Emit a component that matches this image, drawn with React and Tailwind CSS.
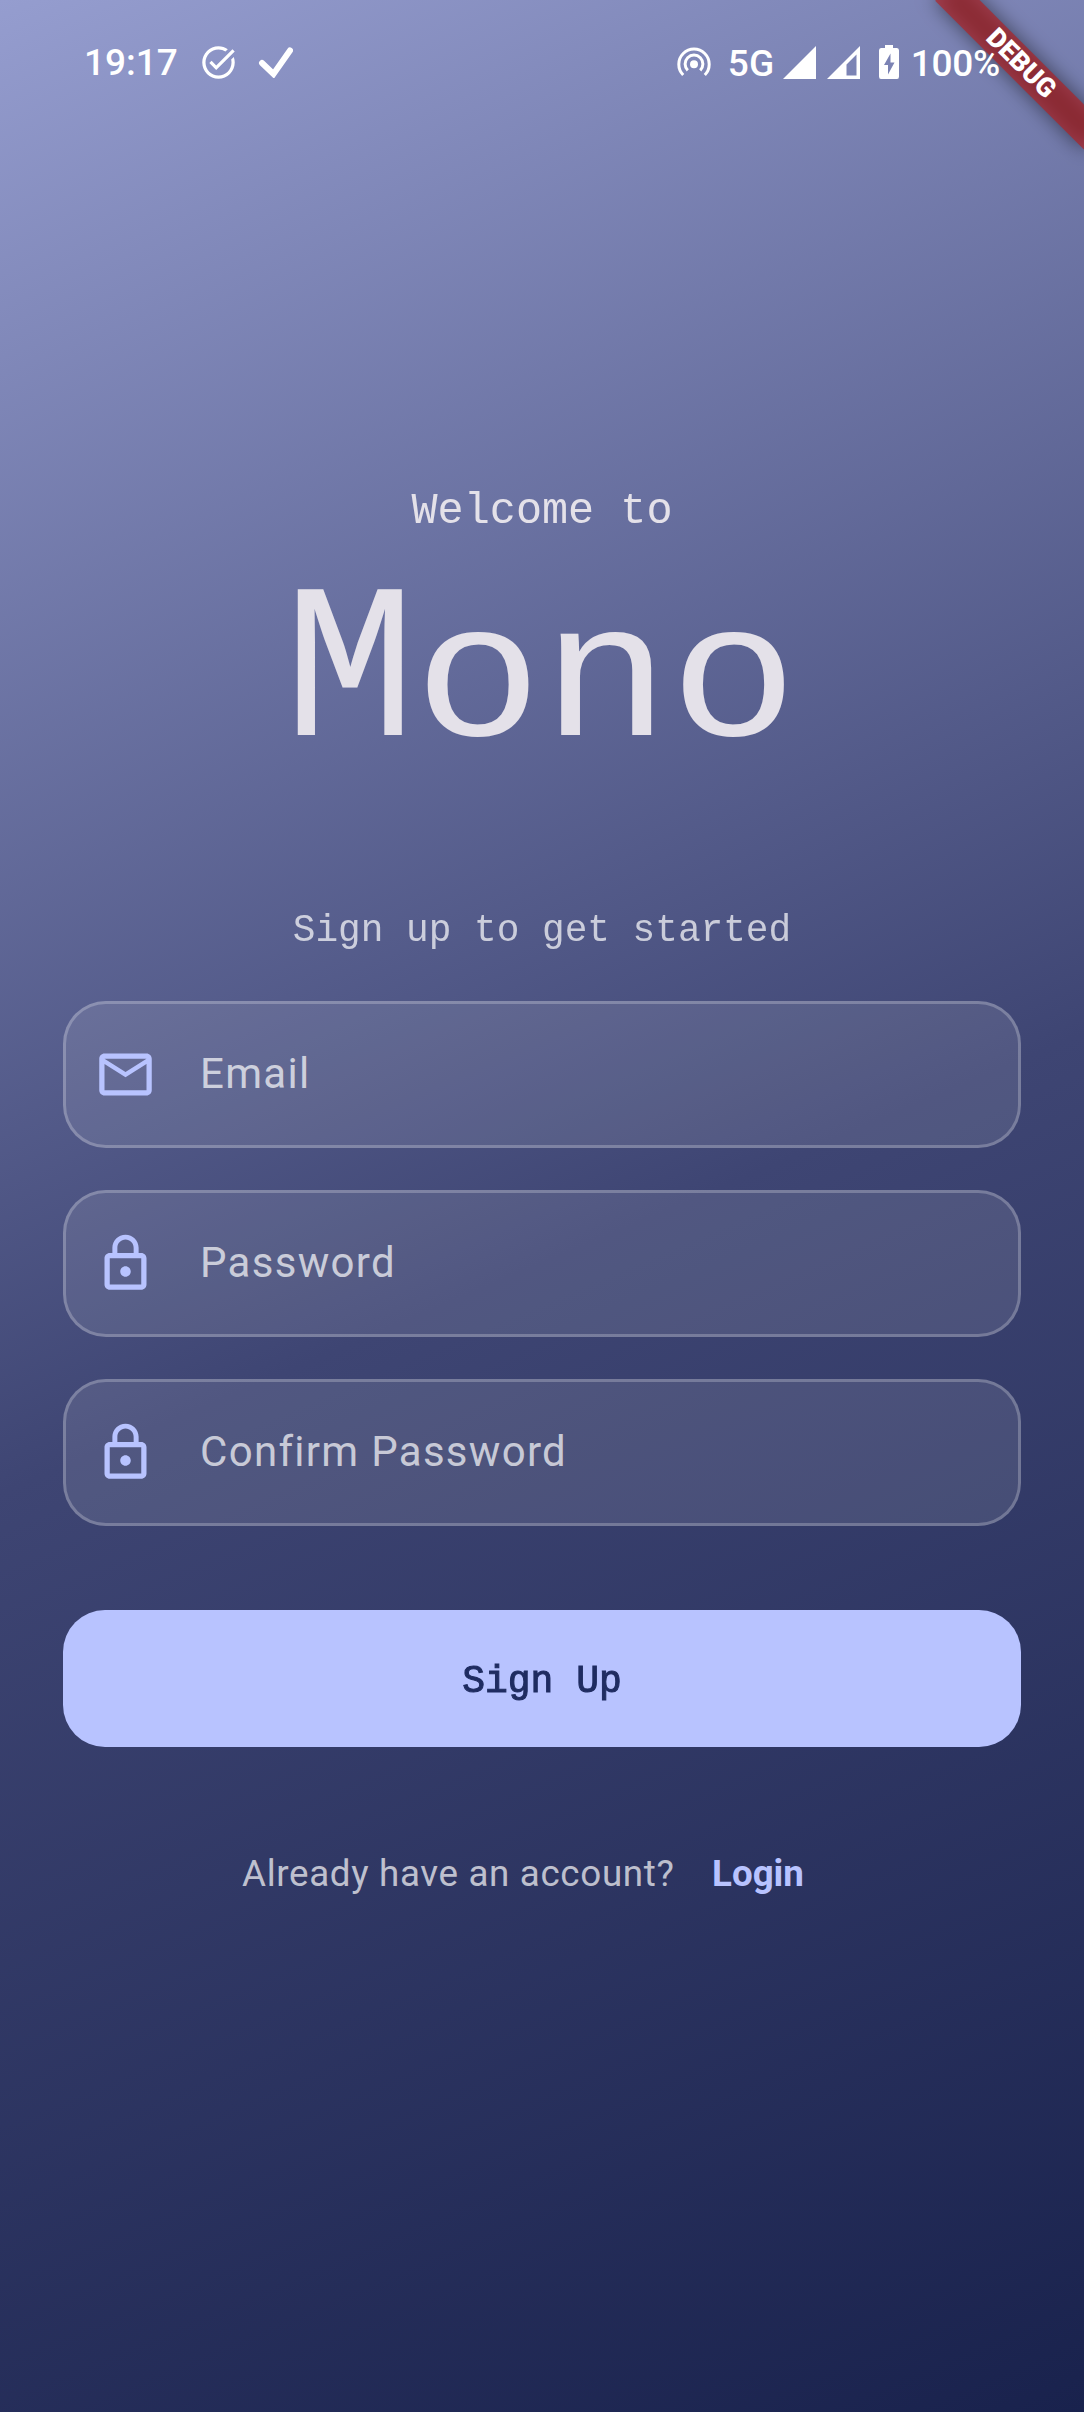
import React from "react";

const MAIL =
  "M22 6c0-1.1-.9-2-2-2H4c-1.1 0-2 .9-2 2v12c0 1.1.9 2 2 2h16c1.1 0 2-.9 2-2V6zm-2 0l-8 5-8-5h16zm0 12H4V8l8 5 8-5v10z";
const LOCK =
  "M12 17c1.1 0 2-.9 2-2s-.9-2-2-2-2 .9-2 2 .9 2 2 2zm6-9h-1V6c0-2.76-2.24-5-5-5S7 3.24 7 6v2H6c-1.1 0-2 .9-2 2v10c0 1.1.9 2 2 2h12c1.1 0 2-.9 2-2V10c0-1.1-.9-2-2-2zM8.9 6c0-1.71 1.39-3.1 3.1-3.1s3.1 1.39 3.1 3.1v2H8.9V6zM18 20H6V10h12v10z";
const TASK =
  "M22 5.18 10.59 16.6l-4.24-4.24 1.41-1.41 2.83 2.83 10-10L22 5.18zm-2.21 5.04c.13.57.21 1.17.21 1.78 0 4.42-3.58 8-8 8s-8-3.58-8-8 3.58-8 8-8c1.58 0 3.04.46 4.28 1.25l1.44-1.44C16.1 2.67 14.13 2 12 2 6.48 2 2 6.48 2 12s4.48 10 10 10 10-4.48 10-10c0-1.19-.22-2.33-.6-3.39l-1.61 1.61z";

function StatusBar() {
  return (
    <header className="relative z-10 flex h-[126px] items-start justify-between pl-[84px] pr-[83px] text-[37px] font-medium leading-[44px] text-white">
      <div className="flex pt-[41px]">
        <span className="w-[114.500px] tracking-[0px]">19:17</span>
        <svg className="mt-[2px] h-[39px] w-[39px] fill-white" viewBox="0 0 24 24">
          <path d={TASK} />
        </svg>
        <svg className="ml-[19px] mt-[5px] h-[32px] w-[36px]" viewBox="0 0 36 32" fill="none" stroke="white" strokeWidth="6">
          <path d="M5 18 16.500 29 33 5.500" strokeLinecap="round" transform="translate(0 -1)" />
        </svg>
      </div>
      <div className="flex pt-[42px]">
        <svg className="mt-[5px] h-[34px] w-[34px]" viewBox="0 0 34 34" fill="none" stroke="white" strokeWidth="3">
          <path d="M6.2 28A15.2 15.2 0 1 1 27.8 28M10.8 23.4A8.9 8.9 0 1 1 23.2 23.4" />
          <circle cx="17" cy="17.2" r="4" fill="white" stroke="none" />
        </svg>
        <span className="ml-[17px] w-[55px]">5G</span>
        <svg className="mt-[4px] h-[33px] w-[33px] fill-white" viewBox="0 0 33 33">
          <path d="M33 0V33H0Z" />
        </svg>
        <svg className="ml-[11px] mt-[4px] h-[33px] w-[33px] fill-white" viewBox="0 0 33 33">
          <path fillRule="evenodd" d="M33 0V33H0ZM29.500 8.500 19.500 18.500V29.500H29.500Z" />
        </svg>
        <svg className="ml-[19px] mt-[3px] h-[34px] w-[20px] fill-white" viewBox="0 0 20 34">
          <path fillRule="evenodd" d="M6 0H14V3H18Q20 3 20 5.500V31.500Q20 34 18 34H2Q0 34 0 31.500V5.500Q0 3 2 3H6ZM11.500 8.500 5 20H9V29.500L15.500 17.500H11.500Z" />
        </svg>
        <span className="-mr-px ml-[12px] pr-[2px] tracking-[-0.3px]">100%</span>
      </div>
    </header>
  );
}

function DebugBanner() {
  return (
    <div className="absolute right-0 top-0 h-[260px] w-[260px] overflow-hidden">
      <div className="absolute left-[155px] top-[73.5px] h-[31.5px] w-[210px] origin-[105px_-73.5px] rotate-45">
        <div className="absolute inset-0 bg-black/50 blur-[10px]" />
        <div className="absolute inset-0 bg-[#B71C1C]/63 text-center text-[26.8px] font-black leading-[31.5px] text-white">
          DEBUG
        </div>
      </div>
    </div>
  );
}

function Field({ icon, label }) {
  return (
    <div className="flex h-[147px] items-center rounded-[43px] border-[3px] border-white/23 bg-white/10 pl-[28px]">
      <svg className="h-[63px] w-[63px] shrink-0 fill-[#B8C3FF]" viewBox="0 0 24 24">
        <path d={icon} />
      </svg>
      <span className="ml-[43px] pb-[2px] text-[42px] leading-[60px] tracking-[1.3px] text-white/70">{label}</span>
    </div>
  );
}

export default function App() {
  return (
    <main className="relative h-[2412px] w-[1084px] overflow-hidden bg-[linear-gradient(157deg,#959DCF_0%,#3E4573_52%,#19224D_100%)] font-['Roboto',sans-serif]">
      <StatusBar />
      <div className="flex flex-col px-[63px] pt-[356px]">
        <div className="flex flex-col items-center font-['Liberation_Mono',monospace] text-[#E4E1E9]">
          <p className="origin-[50%_42px] scale-y-[1.03] text-[43.5px] leading-[60px]">Welcome to</p>
          <h1 className="mt-[22px] flex text-[213px] leading-[230px]">
            <span className="origin-[50%_172px] scale-x-[1.03] scale-y-[1.04]">M</span>
            <span className="origin-[50%_172px] scale-y-[0.9]">ono</span>
          </h1>
          <p className="mt-[107px] origin-[50%_40px] scale-y-[1.03] text-[37.75px] leading-[60px] text-white/70">
            Sign up to get started
          </p>
        </div>
        <div className="mt-[40px] flex flex-col gap-[42px]">
          <Field icon={MAIL} label="Email" />
          <Field icon={LOCK} label="Password" />
          <Field icon={LOCK} label="Confirm Password" />
        </div>
        <button className="mt-[84px] h-[136.5px] rounded-[42px] bg-[#B8C3FF] font-['Liberation_Mono',monospace] text-[38px] text-[#1F2C61] [-webkit-text-stroke:1px_#1F2C61]">
          <span className="inline-block pt-[7px] scale-y-[1.03]">Sign Up</span>
        </button>
        <div className="mt-[102px] flex pl-[179px] text-[36.75px] leading-[50px]">
          <span className="w-[470px] tracking-[0.66px] text-white/70">Already have an account?</span>
          <span className="font-bold text-[#B8C3FF]">Login</span>
        </div>
      </div>
      <DebugBanner />
    </main>
  );
}
